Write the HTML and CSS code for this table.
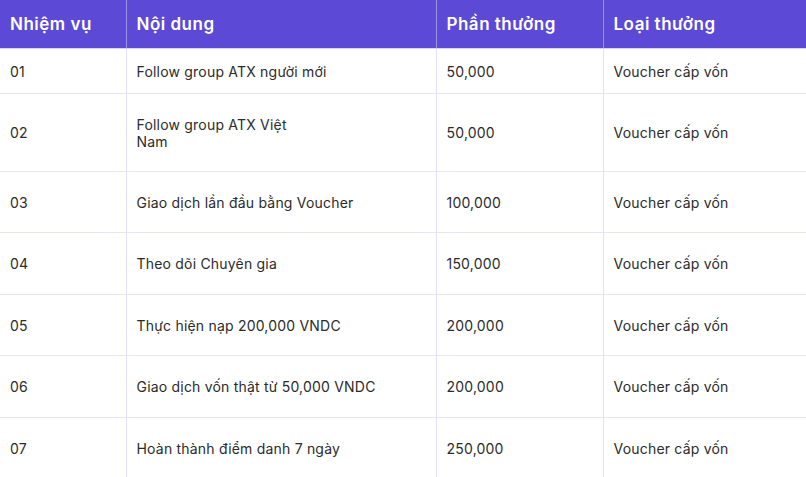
FILE: index.html
```html
<!DOCTYPE html>
<html lang="vi">
<head>
<meta charset="utf-8">
<link rel="stylesheet" href="styles.css">
</head>
<body>
<table class="tasks">
  <colgroup>
    <col class="c1"><col class="c2"><col class="c3"><col class="c4">
  </colgroup>
  <thead>
    <tr><th>Nhiệm vụ</th><th>Nội dung</th><th>Phần thưởng</th><th>Loại thưởng</th></tr>
  </thead>
  <tbody>
    <tr class="first"><td>01</td><td>Follow group ATX người mới</td><td>50,000</td><td>Voucher cấp vốn</td></tr>
    <tr class="tall"><td>02</td><td><span class="narrow">Follow group ATX Việt Nam</span></td><td>50,000</td><td>Voucher cấp vốn</td></tr>
    <tr><td>03</td><td>Giao dịch lần đầu bằng Voucher</td><td>100,000</td><td>Voucher cấp vốn</td></tr>
    <tr><td>04</td><td>Theo dõi Chuyên gia</td><td>150,000</td><td>Voucher cấp vốn</td></tr>
    <tr><td>05</td><td>Thực hiện nạp 200,000 VNDC</td><td>200,000</td><td>Voucher cấp vốn</td></tr>
    <tr><td>06</td><td>Giao dịch vốn thật từ 50,000 VNDC</td><td>200,000</td><td>Voucher cấp vốn</td></tr>
    <tr><td>07</td><td>Hoàn thành điểm danh 7 ngày</td><td>250,000</td><td>Voucher cấp vốn</td></tr>
  </tbody>
</table>
</body>
</html>
```
FILE: styles.css
```css
html, body {
  margin: 0;
  padding: 0;
  background: #ffffff;
}
body {
  font-family: Inter, "Noto Sans", sans-serif;
  color: #2b2b2b;
  overflow: hidden;
}
.tasks {
  width: 806px;
  border-collapse: collapse;
  table-layout: fixed;
}
.c1 { width: 126px; }
.c2 { width: 310px; }
.c3 { width: 167px; }
.c4 { width: 203px; }
.tasks th {
  background: #5c4ad6;
  color: #ffffff;
  font-size: 17px;
  font-weight: 600;
  text-align: left;
  height: 48px;
  padding: 0 10px;
  box-sizing: border-box;
  border-left: 1px solid #9d92ea;
  border-bottom: 1px solid #d6d2f4;
  letter-spacing: 0.5px;
}
.tasks th:first-child { border-left: none; padding-left: 10px; }
.tasks td {
  font-size: 14px;
  line-height: 17px;
  letter-spacing: 0.2px;
  padding: 22px 10px 21.5px;
  border-left: 1px solid #e2dff6;
  border-bottom: 1px solid #e6e4f5;
  vertical-align: middle;
}
.tasks td:first-child { border-left: none; }
.tasks tr.first td { padding-top: 14px; padding-bottom: 13px; }
.tasks tr.tall td { padding-top: 22px; padding-bottom: 21px; }
.narrow {
  display: inline-block;
  max-width: 160px;
}
```
